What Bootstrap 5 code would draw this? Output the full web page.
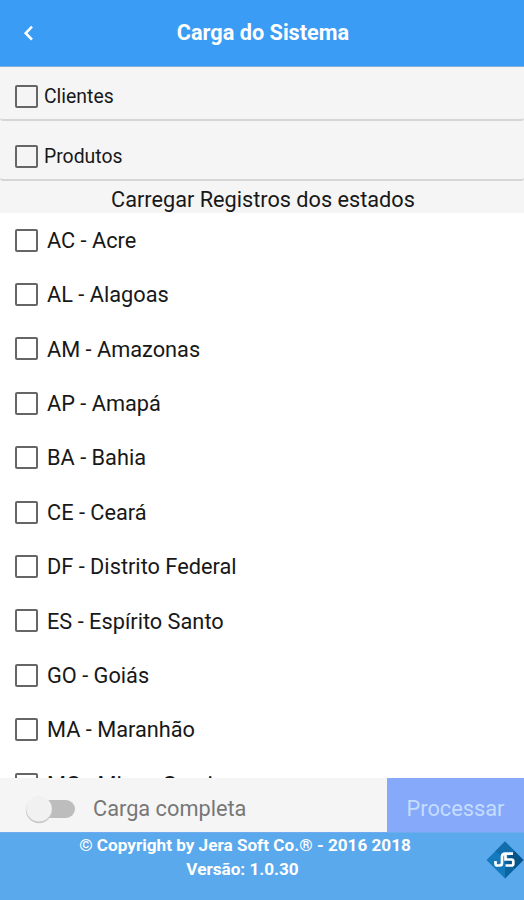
<!DOCTYPE html>
<html lang="pt-BR">
<head>
<meta charset="utf-8">
<meta name="viewport" content="width=device-width, initial-scale=1">
<title>Carga do Sistema</title>
<link href="https://cdn.jsdelivr.net/npm/bootstrap@5.3.0/dist/css/bootstrap.min.css" rel="stylesheet">
<style>
body{font-family:Roboto,"Liberation Sans",sans-serif;color:#181818;line-height:1}
.screen{height:900px;background:#f5f5f5}
.topbar{height:67px;background:#3a9cf4;border-bottom:1px solid #7fb0dc;color:#fff;display:grid;grid-template-columns:56px 1fr 54px}
.topbar h1{font-size:21.7px;font-weight:700}
.option{height:54px;padding:6px 0 0 15px;border-bottom:2px solid #d6d6d6;border-radius:3px;font-size:19.4px;gap:6px}
.option.tall{height:60px;padding-top:12px}
.option span{padding-top:1px}
.check{appearance:none;width:23px;height:23px;border:2px solid #666;border-radius:2px;margin:0;flex:none;background:transparent}
.section-title{height:32px;font-size:21.7px;padding:8px 0 0 2px}
.states{height:565px;background:#fff}
.state{height:54.4px;padding-left:15px;gap:9px;font-size:21.75px;flex:none}
.state span{padding-top:1px}
.actions{height:54px}
.switch-label{font-size:21.75px;color:#777;margin-left:18px}
.process{width:137px;background:#86a9fa;color:#c4dcff;font-size:21.75px;border:0}
.foot{height:68px;background:#5aa9ed;color:#fff;font-size:17.15px;font-weight:700;border-top:1px solid #70abef}
.foot-text{line-height:24px;width:490px}
.version{padding-right:5px}
.foot-logo{width:38px;height:40px;right:0;top:7px}
</style>
<script src="https://cdn.jsdelivr.net/npm/bootstrap@5.3.0/dist/js/bootstrap.bundle.min.js"></script>
</head>
<body>
<main class="screen d-flex flex-column overflow-hidden">
  <header class="topbar align-items-center flex-shrink-0">
    <svg width="56" height="66" fill="none" stroke="#fff" stroke-width="2.6" aria-label="Voltar"><path d="M32 26.7 25.7 33.2 32 39.7"/></svg>
    <h1 class="m-0 text-center">Carga do Sistema</h1>
  </header>
  <label class="option d-flex align-items-center flex-shrink-0"><input class="check" type="checkbox"><span>Clientes</span></label>
  <label class="option tall d-flex align-items-center flex-shrink-0"><input class="check" type="checkbox"><span>Produtos</span></label>
  <div class="section-title text-center flex-shrink-0">Carregar Registros dos estados</div>
  <section class="states d-flex flex-column overflow-hidden flex-shrink-0">
    <label class="state d-flex align-items-center"><input class="check" type="checkbox"><span>AC - Acre</span></label>
    <label class="state d-flex align-items-center"><input class="check" type="checkbox"><span>AL - Alagoas</span></label>
    <label class="state d-flex align-items-center"><input class="check" type="checkbox"><span>AM - Amazonas</span></label>
    <label class="state d-flex align-items-center"><input class="check" type="checkbox"><span>AP - Amapá</span></label>
    <label class="state d-flex align-items-center"><input class="check" type="checkbox"><span>BA - Bahia</span></label>
    <label class="state d-flex align-items-center"><input class="check" type="checkbox"><span>CE - Ceará</span></label>
    <label class="state d-flex align-items-center"><input class="check" type="checkbox"><span>DF - Distrito Federal</span></label>
    <label class="state d-flex align-items-center"><input class="check" type="checkbox"><span>ES - Espírito Santo</span></label>
    <label class="state d-flex align-items-center"><input class="check" type="checkbox"><span>GO - Goiás</span></label>
    <label class="state d-flex align-items-center"><input class="check" type="checkbox"><span>MA - Maranhão</span></label>
    <label class="state d-flex align-items-center"><input class="check" type="checkbox"><span>MG - Minas Gerais</span></label>
  </section>
  <div class="actions d-flex flex-shrink-0">
    <div class="d-flex align-items-center flex-grow-1 ps-4 pt-2">
      <svg width="51" height="34" viewBox="0 0 51 34"><rect x="10" y="8" width="41" height="18" rx="9" fill="#bdbdbd"/><circle cx="15" cy="18" r="13.2" fill="#c8c8c8"/><circle cx="15" cy="16.8" r="12.8" fill="#f1f1f1"/></svg>
      <span class="switch-label">Carga completa</span>
    </div>
    <button class="process p-0 pt-2" type="button">Processar</button>
  </div>
  <footer class="foot position-relative flex-shrink-0">
    <div class="foot-text text-center"><div>© Copyright by Jera Soft Co.® - 2016 2018</div><div class="version">Versão: 1.0.30</div></div>
    <svg class="foot-logo position-absolute" viewBox="0 0 38 40" aria-label="Jera Soft">
      <path d="M19 1.500 .5 20 19 38.500 37.500 20Z" fill="#1479bd"/><path d="M19 1.500 9.500 11 19 20 28.500 11Z" fill="#116dac"/><path d="M37.500 20 28.500 11 19 20 28.500 29Z" fill="#075489"/><path d="M19 38.500 28.500 29 19 20Z" fill="#0a659f"/>
      <path d="M9.500 21v2.500q0 2 2 2h2q2.500 0 2.500-2.500v-6q0-3.300 3.300-3.300H27M19.500 14.200v5.300h6q1.800 0 1.800 1.800v2.400q0 1.800-1.800 1.800h-6" fill="none" stroke="#fff" stroke-width="2.700"/>
    </svg>
  </footer>
</main>
</body>
</html>
